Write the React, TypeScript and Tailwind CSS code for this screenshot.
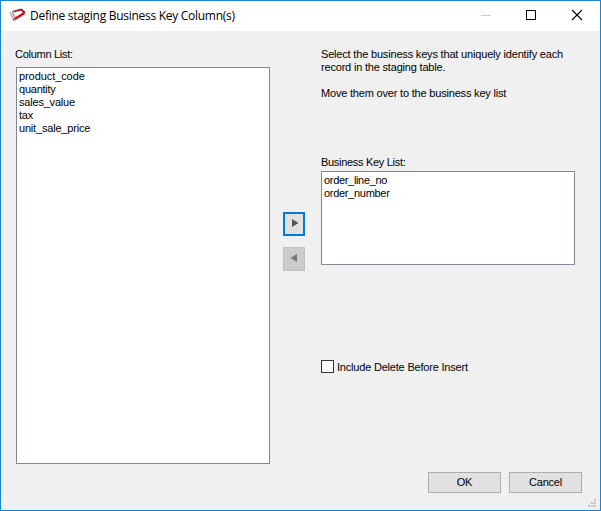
import type { ReactNode } from "react";

const columns = [
  { name: "product_code", tracking: "tracking-[-0.08px]" },
  { name: "quantity", tracking: "tracking-[-0.24px]" },
  { name: "sales_value", tracking: "tracking-[-0.2px]" },
  { name: "tax", tracking: "tracking-[-0.25px]" },
  { name: "unit_sale_price", tracking: "tracking-[-0.19px]" },
];

const keys = [
  { name: "order_line_no", tracking: "tracking-[-0.32px]" },
  { name: "order_number", tracking: "tracking-[-0.3px]" },
];

function ListBox({ items, className }: { items: typeof columns; className: string }) {
  return (
    <ul className={`w-[254px] border border-[#828790] bg-white pl-[2px] pt-[2px] ${className}`}>
      {items.map((item) => (
        <li key={item.name} className={`h-[13px] ${item.tracking}`}>
          {item.name}
        </li>
      ))}
    </ul>
  );
}

function DialogButton({ children }: { children: ReactNode }) {
  return (
    <button className="flex h-[21px] w-[73px] items-center justify-center border border-[#adadad] bg-[#e1e1e1]">
      {children}
    </button>
  );
}

function Logo() {
  return (
    <svg width="17" height="14" viewBox="0 0 17 14">
      <path d="M1 4.2 L4.6 11.2" stroke="#bcb4b4" strokeWidth="1.8" fill="none" />
      <path d="M3.4 3.2 L5.8 9.5" stroke="#9c6267" strokeWidth="1" fill="none" />
      <path d="M4.4 3.6 L12.2 1.6 L14.6 3.4" stroke="#a3202c" strokeWidth="1.9" fill="none" />
      <path d="M5.4 11.2 L14.6 5.6 L14.8 3" stroke="#d50d20" strokeWidth="2.5" fill="none" />
      <path d="M3.5 11.3 L5 9.8 L6.2 12.4 L4.2 12.9 Z" fill="#a9808a" />
    </svg>
  );
}

export default function App() {
  return (
    <div className="flex h-[511px] w-[601px] flex-col border border-[#1883d7] bg-[#f0f0f0] font-['Liberation_Sans',Arial,sans-serif] text-[11px] leading-[13px] text-black">
      <header className="flex h-[30px] shrink-0 bg-white">
        <div className="pl-2 pt-[7px]">
          <Logo />
        </div>
        <h1 className="whitespace-nowrap pl-1 pt-[6px] font-['Open_Sans','Noto_Sans',sans-serif] text-[12px] leading-[17px] tracking-[-0.28px]">
          Define staging Business Key Column(s)
        </h1>
        <svg className="ml-auto mr-[13px] mt-[8px]" width="106" height="12" viewBox="0 0 106 12" fill="none" shapeRendering="crispEdges">
          <path d="M0 6.5H10" stroke="#cccccc" />
          <path d="M45.5 1.5h9v9h-9z" stroke="#000" />
          <path d="M91 1l10 10M101 1l-10 10" stroke="#000" shapeRendering="auto" strokeWidth="1.1" />
        </svg>
      </header>
      <main className="flex h-[433px] shrink-0 pl-[15px]">
        <section className="w-[254px] pt-[17px]">
          <h2 className="-ml-px h-[19px] tracking-[-0.28px]">Column List:</h2>
          <ListBox items={columns} className="h-[397px]" />
        </section>
        <div className="flex w-[51px] flex-col items-start gap-[11px] pl-[13px] pt-[181px]">
          <button className="flex h-6 w-[22px] items-center justify-center border-2 border-[#0078d7] bg-[#e1e1e1] pb-[2px] pl-px">
            <svg width="8" height="8" viewBox="0 0 8 8"><path d="M1 0L7.5 4L1 8Z" fill="#555" /></svg>
          </button>
          <button className="flex h-6 w-[22px] items-center justify-center border border-[#bfbfbf] bg-[#cccccc] pb-[2px]">
            <svg width="8" height="8" viewBox="0 0 8 8"><path d="M7 0L.5 4L7 8Z" fill="#777" /></svg>
          </button>
        </div>
        <section className="w-[254px] whitespace-nowrap pt-[17px]">
          <p className="tracking-[-0.18px]">Select the business keys that uniquely identify each</p>
          <p className="tracking-[-0.19px]">record in the staging table.</p>
          <p className="pt-[13px] tracking-[-0.19px]">Move them over to the business key list</p>
          <h2 className="mt-[56px] h-[15px] tracking-[-0.3px]">Business Key List:</h2>
          <ListBox items={keys} className="h-[94px]" />
          <label className="mt-[95px] flex h-[13px] gap-[3px]">
            <span className="size-[13px] border border-[#333] bg-white" />
            <span className="pt-px tracking-[-0.2px]">Include Delete Before Insert</span>
          </label>
        </section>
      </main>
      <footer className="flex flex-1 justify-end pr-1 pt-2">
        <div className="flex gap-2">
          <DialogButton><span className="tracking-[-0.1px]">OK</span></DialogButton>
          <DialogButton><span className="tracking-[-0.2px]">Cancel</span></DialogButton>
        </div>
        <svg className="ml-[6px] mt-[27px]" width="8" height="8" viewBox="0 0 8 8" fill="#bfbfbf" shapeRendering="crispEdges">
          <path d="M6 0h2v2h-2zM3 3h2v2h-2zM6 3h2v2h-2zM0 6h2v2h-2zM3 6h2v2h-2zM6 6h2v2h-2z" />
        </svg>
      </footer>
    </div>
  );
}
